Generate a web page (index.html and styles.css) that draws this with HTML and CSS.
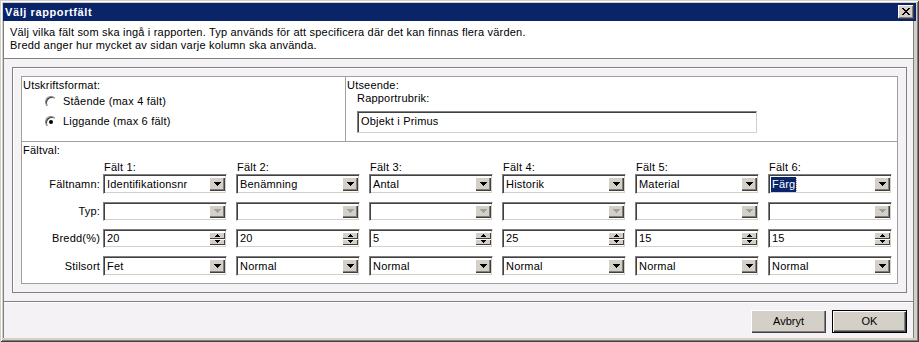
FILE: index.html
```html
<!DOCTYPE html>
<html lang="sv">
<head>
    <meta charset="UTF-8">
    <title>Välj rapportfält</title>
    <link rel="stylesheet" href="styles.css">
</head>
<body>
    <div class="window">
        <div class="titlebar">
            <span class="title">Välj rapportfält</span>
            <span class="close"><svg width="8" height="7" viewBox="0 0 8 7"><path d="M0 0h2v1H0zM6 0h2v1H6zM1 1h2v1H1zM5 1h2v1H5zM2 2h4v1H2zM3 3h2v1H3zM2 4h4v1H2zM1 5h2v1H1zM5 5h2v1H5zM0 6h2v1H0zM6 6h2v1H6z"/></svg></span>
        </div>

        <div class="main">
            <div class="intro">
                Välj vilka fält som ska ingå i rapporten. Typ används för att specificera där det kan finnas flera värden.<br>
                Bredd anger hur mycket av sidan varje kolumn ska använda.
            </div>

            <div class="content">
                <div class="frame">
                    <div class="panel">
                        <div class="top">
                            <div class="cell format">
                                <div class="caption">Utskriftsformat:</div>
                                <label class="radio"><span class="dot"></span>Stående (max 4 fält)</label>
                                <label class="radio"><span class="dot checked"></span>Liggande (max 6 fält)</label>
                            </div>
                            <div class="cell look">
                                <div class="caption">Utseende:</div>
                                <div class="sub">Rapportrubrik:</div>
                                <div class="textbox">Objekt i Primus</div>
                            </div>
                        </div>

                        <div class="fields">
                            <div class="caption">Fältval:</div>
                            <div class="grid heads">
                                <span></span>
                                <span>Fält 1:</span>
                                <span>Fält 2:</span>
                                <span>Fält 3:</span>
                                <span>Fält 4:</span>
                                <span>Fält 5:</span>
                                <span>Fält 6:</span>
                            </div>
                            <div class="grid rows">
                                <!-- Fältnamn -->
                                <span class="rowlabel">Fältnamn:</span>
                                <div class="combo"><span class="val">Identifikationsnr</span><span class="drop"><svg width="7" height="4"><path d="M0 0h7v1H0zM1 1h5v1H1zM2 2h3v1H2zM3 3h1v1H3z"/></svg></span></div>
                                <div class="combo"><span class="val">Benämning</span><span class="drop"><svg width="7" height="4"><path d="M0 0h7v1H0zM1 1h5v1H1zM2 2h3v1H2zM3 3h1v1H3z"/></svg></span></div>
                                <div class="combo"><span class="val">Antal</span><span class="drop"><svg width="7" height="4"><path d="M0 0h7v1H0zM1 1h5v1H1zM2 2h3v1H2zM3 3h1v1H3z"/></svg></span></div>
                                <div class="combo"><span class="val">Historik</span><span class="drop"><svg width="7" height="4"><path d="M0 0h7v1H0zM1 1h5v1H1zM2 2h3v1H2zM3 3h1v1H3z"/></svg></span></div>
                                <div class="combo"><span class="val">Material</span><span class="drop"><svg width="7" height="4"><path d="M0 0h7v1H0zM1 1h5v1H1zM2 2h3v1H2zM3 3h1v1H3z"/></svg></span></div>
                                <div class="combo"><span class="val"><span class="selected">Färg</span></span><span class="drop"><svg width="7" height="4"><path d="M0 0h7v1H0zM1 1h5v1H1zM2 2h3v1H2zM3 3h1v1H3z"/></svg></span></div>

                                <!-- Typ -->
                                <span class="rowlabel">Typ:</span>
                                <div class="combo disabled"><span class="val"></span><span class="drop"><svg width="7" height="4"><path d="M0 0h7v1H0zM1 1h5v1H1zM2 2h3v1H2zM3 3h1v1H3z"/></svg></span></div>
                                <div class="combo disabled"><span class="val"></span><span class="drop"><svg width="7" height="4"><path d="M0 0h7v1H0zM1 1h5v1H1zM2 2h3v1H2zM3 3h1v1H3z"/></svg></span></div>
                                <div class="combo disabled"><span class="val"></span><span class="drop"><svg width="7" height="4"><path d="M0 0h7v1H0zM1 1h5v1H1zM2 2h3v1H2zM3 3h1v1H3z"/></svg></span></div>
                                <div class="combo disabled"><span class="val"></span><span class="drop"><svg width="7" height="4"><path d="M0 0h7v1H0zM1 1h5v1H1zM2 2h3v1H2zM3 3h1v1H3z"/></svg></span></div>
                                <div class="combo disabled"><span class="val"></span><span class="drop"><svg width="7" height="4"><path d="M0 0h7v1H0zM1 1h5v1H1zM2 2h3v1H2zM3 3h1v1H3z"/></svg></span></div>
                                <div class="combo disabled"><span class="val"></span><span class="drop"><svg width="7" height="4"><path d="M0 0h7v1H0zM1 1h5v1H1zM2 2h3v1H2zM3 3h1v1H3z"/></svg></span></div>

                                <!-- Bredd -->
                                <span class="rowlabel">Bredd(%)</span>
                                <div class="combo spin"><span class="val">20</span><span class="spinbtns"><span class="sb"><svg width="5" height="3"><path d="M2 0h1v1H2zM1 1h3v1H1zM0 2h5v1H0z"/></svg></span><span class="sb"><svg width="5" height="3"><path d="M0 0h5v1H0zM1 1h3v1H1zM2 2h1v1H2z"/></svg></span></span></div>
                                <div class="combo spin"><span class="val">20</span><span class="spinbtns"><span class="sb"><svg width="5" height="3"><path d="M2 0h1v1H2zM1 1h3v1H1zM0 2h5v1H0z"/></svg></span><span class="sb"><svg width="5" height="3"><path d="M0 0h5v1H0zM1 1h3v1H1zM2 2h1v1H2z"/></svg></span></span></div>
                                <div class="combo spin"><span class="val">5</span><span class="spinbtns"><span class="sb"><svg width="5" height="3"><path d="M2 0h1v1H2zM1 1h3v1H1zM0 2h5v1H0z"/></svg></span><span class="sb"><svg width="5" height="3"><path d="M0 0h5v1H0zM1 1h3v1H1zM2 2h1v1H2z"/></svg></span></span></div>
                                <div class="combo spin"><span class="val">25</span><span class="spinbtns"><span class="sb"><svg width="5" height="3"><path d="M2 0h1v1H2zM1 1h3v1H1zM0 2h5v1H0z"/></svg></span><span class="sb"><svg width="5" height="3"><path d="M0 0h5v1H0zM1 1h3v1H1zM2 2h1v1H2z"/></svg></span></span></div>
                                <div class="combo spin"><span class="val">15</span><span class="spinbtns"><span class="sb"><svg width="5" height="3"><path d="M2 0h1v1H2zM1 1h3v1H1zM0 2h5v1H0z"/></svg></span><span class="sb"><svg width="5" height="3"><path d="M0 0h5v1H0zM1 1h3v1H1zM2 2h1v1H2z"/></svg></span></span></div>
                                <div class="combo spin"><span class="val">15</span><span class="spinbtns"><span class="sb"><svg width="5" height="3"><path d="M2 0h1v1H2zM1 1h3v1H1zM0 2h5v1H0z"/></svg></span><span class="sb"><svg width="5" height="3"><path d="M0 0h5v1H0zM1 1h3v1H1zM2 2h1v1H2z"/></svg></span></span></div>

                                <!-- Stilsort -->
                                <span class="rowlabel">Stilsort</span>
                                <div class="combo"><span class="val">Fet</span><span class="drop"><svg width="7" height="4"><path d="M0 0h7v1H0zM1 1h5v1H1zM2 2h3v1H2zM3 3h1v1H3z"/></svg></span></div>
                                <div class="combo"><span class="val">Normal</span><span class="drop"><svg width="7" height="4"><path d="M0 0h7v1H0zM1 1h5v1H1zM2 2h3v1H2zM3 3h1v1H3z"/></svg></span></div>
                                <div class="combo"><span class="val">Normal</span><span class="drop"><svg width="7" height="4"><path d="M0 0h7v1H0zM1 1h5v1H1zM2 2h3v1H2zM3 3h1v1H3z"/></svg></span></div>
                                <div class="combo"><span class="val">Normal</span><span class="drop"><svg width="7" height="4"><path d="M0 0h7v1H0zM1 1h5v1H1zM2 2h3v1H2zM3 3h1v1H3z"/></svg></span></div>
                                <div class="combo"><span class="val">Normal</span><span class="drop"><svg width="7" height="4"><path d="M0 0h7v1H0zM1 1h5v1H1zM2 2h3v1H2zM3 3h1v1H3z"/></svg></span></div>
                                <div class="combo"><span class="val">Normal</span><span class="drop"><svg width="7" height="4"><path d="M0 0h7v1H0zM1 1h5v1H1zM2 2h3v1H2zM3 3h1v1H3z"/></svg></span></div>
                            </div>
                        </div>
                    </div>
                </div>
            </div>

            <div class="footer">
                <button class="btn">Avbryt</button>
                <button class="btn default">OK</button>
            </div>
        </div>
    </div>
</body>
</html>
```

FILE: styles.css
```css
* {
    box-sizing: border-box;
}

html, body {
    margin: 0;
    padding: 0;
}

body {
    width: 919px;
    height: 342px;
    overflow: hidden;
    font-family: Tahoma, "Liberation Sans", sans-serif;
    font-size: 11px;
    line-height: 13px;
    letter-spacing: 0.2px;
    color: #000;
}

.window {
    width: 919px;
    height: 342px;
    padding: 3px 3px 4px 3px;
    background: #d4d0c8;
    box-shadow: inset 1px 1px #d4d0c8, inset -1px -1px #404040, inset 2px 2px #fff, inset -2px -2px #808080;
    display: flex;
    flex-direction: column;
}

.titlebar {
    height: 18px;
    background: #0a246a;
    color: #fff;
    display: flex;
    align-items: center;
    justify-content: space-between;
    padding: 0 2px;
}

.title {
    font-weight: bold;
    letter-spacing: 0.6px;
}

.close {
    width: 16px;
    height: 14px;
    background: #d4d0c8;
    box-shadow: inset -1px -1px #404040, inset 1px 1px #fff, inset -2px -2px #808080;
    display: flex;
    align-items: center;
    justify-content: center;
    padding: 0 1px 1px 0;
}

.main {
    flex: 1;
    display: flex;
    flex-direction: column;
    border-left: 1px solid #808080;
    border-right: 1px solid #808080;
    margin-right: 2px;
}

.intro {
    height: 38px;
    background: #fff;
    padding: 5px 6px 0;
    border-bottom: 1px solid #808080;
}

.content {
    background: #f5f2f5;
    padding: 8px 6px 8px 8px;
    border-bottom: 1px solid #808080;
}

.frame {
    border: 1px solid #808080;
    box-shadow: inset 1px 1px #fff;
    padding: 8px;
}

.panel {
    height: 208px;
    background: #fff;
    border: 1px solid #a0a0a0;
}

.top {
    display: flex;
    height: 65px;
    border-bottom: 1px solid #a0a0a0;
}

.cell {
    padding: 2px 1px 0;
}

.format {
    width: 324px;
    border-right: 1px solid #a0a0a0;
}

.look {
    flex: 1;
}

.radio {
    display: flex;
    align-items: center;
    gap: 6px;
    height: 13px;
    margin: 3px 0 0 22px;
}

.radio + .radio {
    margin-top: 7px;
}

.dot {
    width: 12px;
    height: 12px;
    border-radius: 50%;
    border: 1px solid;
    border-color: #808080 #fff #fff #808080;
    background: #fff;
    box-shadow: inset 1px 1px #404040;
    display: flex;
    align-items: center;
    justify-content: center;
}

.dot.checked::after {
    content: "";
    width: 4px;
    height: 4px;
    border-radius: 50%;
    background: #000;
}

.sub {
    margin-left: 10px;
}

.textbox {
    margin: 6px 0 0 10px;
    width: 400px;
    height: 22px;
    padding: 3px 3px 0;
    border: 1px solid;
    border-color: #808080 #d4d0c8 #d4d0c8 #808080;
    box-shadow: inset 1px 1px #404040;
}

.fields {
    padding: 2px 0 0 1px;
}

.grid {
    display: grid;
    grid-template-columns: 80px repeat(5, 133px) 124px;
}

.heads {
    margin-top: 4px;
    height: 13px;
}

.heads span {
    padding-left: 1px;
}

.rows {
    grid-template-rows: 20px 19px 19px 20px;
    row-gap: 8px;
}

.rowlabel {
    text-align: right;
    padding-right: 3px;
    align-self: center;
}

.combo {
    width: 124px;
    display: flex;
    align-items: center;
    padding: 2px;
    border: 1px solid;
    border-color: #808080 #fff #fff #808080;
    box-shadow: inset 1px 1px #404040, inset -1px -1px #d4d0c8;
    background: #fff;
}

.val {
    flex: 1;
    padding-left: 1px;
    white-space: nowrap;
    overflow: hidden;
}

.selected {
    display: inline-block;
    background: #0a246a;
    color: #fff;
    padding: 1px 1px;
    margin-left: -1px;
    outline: 1px dotted #a0a0a0;
}

.drop {
    width: 16px;
    height: 100%;
    margin-right: -1px;
    background: #d4d0c8;
    box-shadow: inset 1px 1px #fff, inset -1px -1px #404040, inset -2px -2px #808080;
    display: flex;
    align-items: center;
    justify-content: center;
    padding-bottom: 1px;
}

.drop svg {
    fill: #000;
}

.disabled .drop svg {
    fill: #a0a0a0;
}

.spinbtns {
    width: 16px;
    height: 100%;
    margin-right: -1px;
    display: flex;
    flex-direction: column;
}

.sb {
    flex: 1;
    background: #d4d0c8;
    box-shadow: inset 1px 1px #fff, inset -1px -1px #404040;
    display: flex;
    align-items: center;
    justify-content: center;
}

.footer {
    flex: 1;
    background: #f5f2f5;
    border-top: 1px solid #fff;
    display: flex;
    justify-content: flex-end;
    align-items: flex-start;
    gap: 6px;
    padding: 7px 6px 0 0;
}

.btn {
    width: 75px;
    height: 23px;
    font: inherit;
    color: #000;
    background: #d4d0c8;
    border: none;
    box-shadow: inset 1px 1px #fff, inset -1px -1px #404040, inset -2px -2px #808080;
    padding: 0;
}

.btn.default {
    box-shadow: inset 0 0 0 1px #000, inset 2px 2px #fff, inset -2px -2px #404040, inset -3px -3px #808080;
}
```
